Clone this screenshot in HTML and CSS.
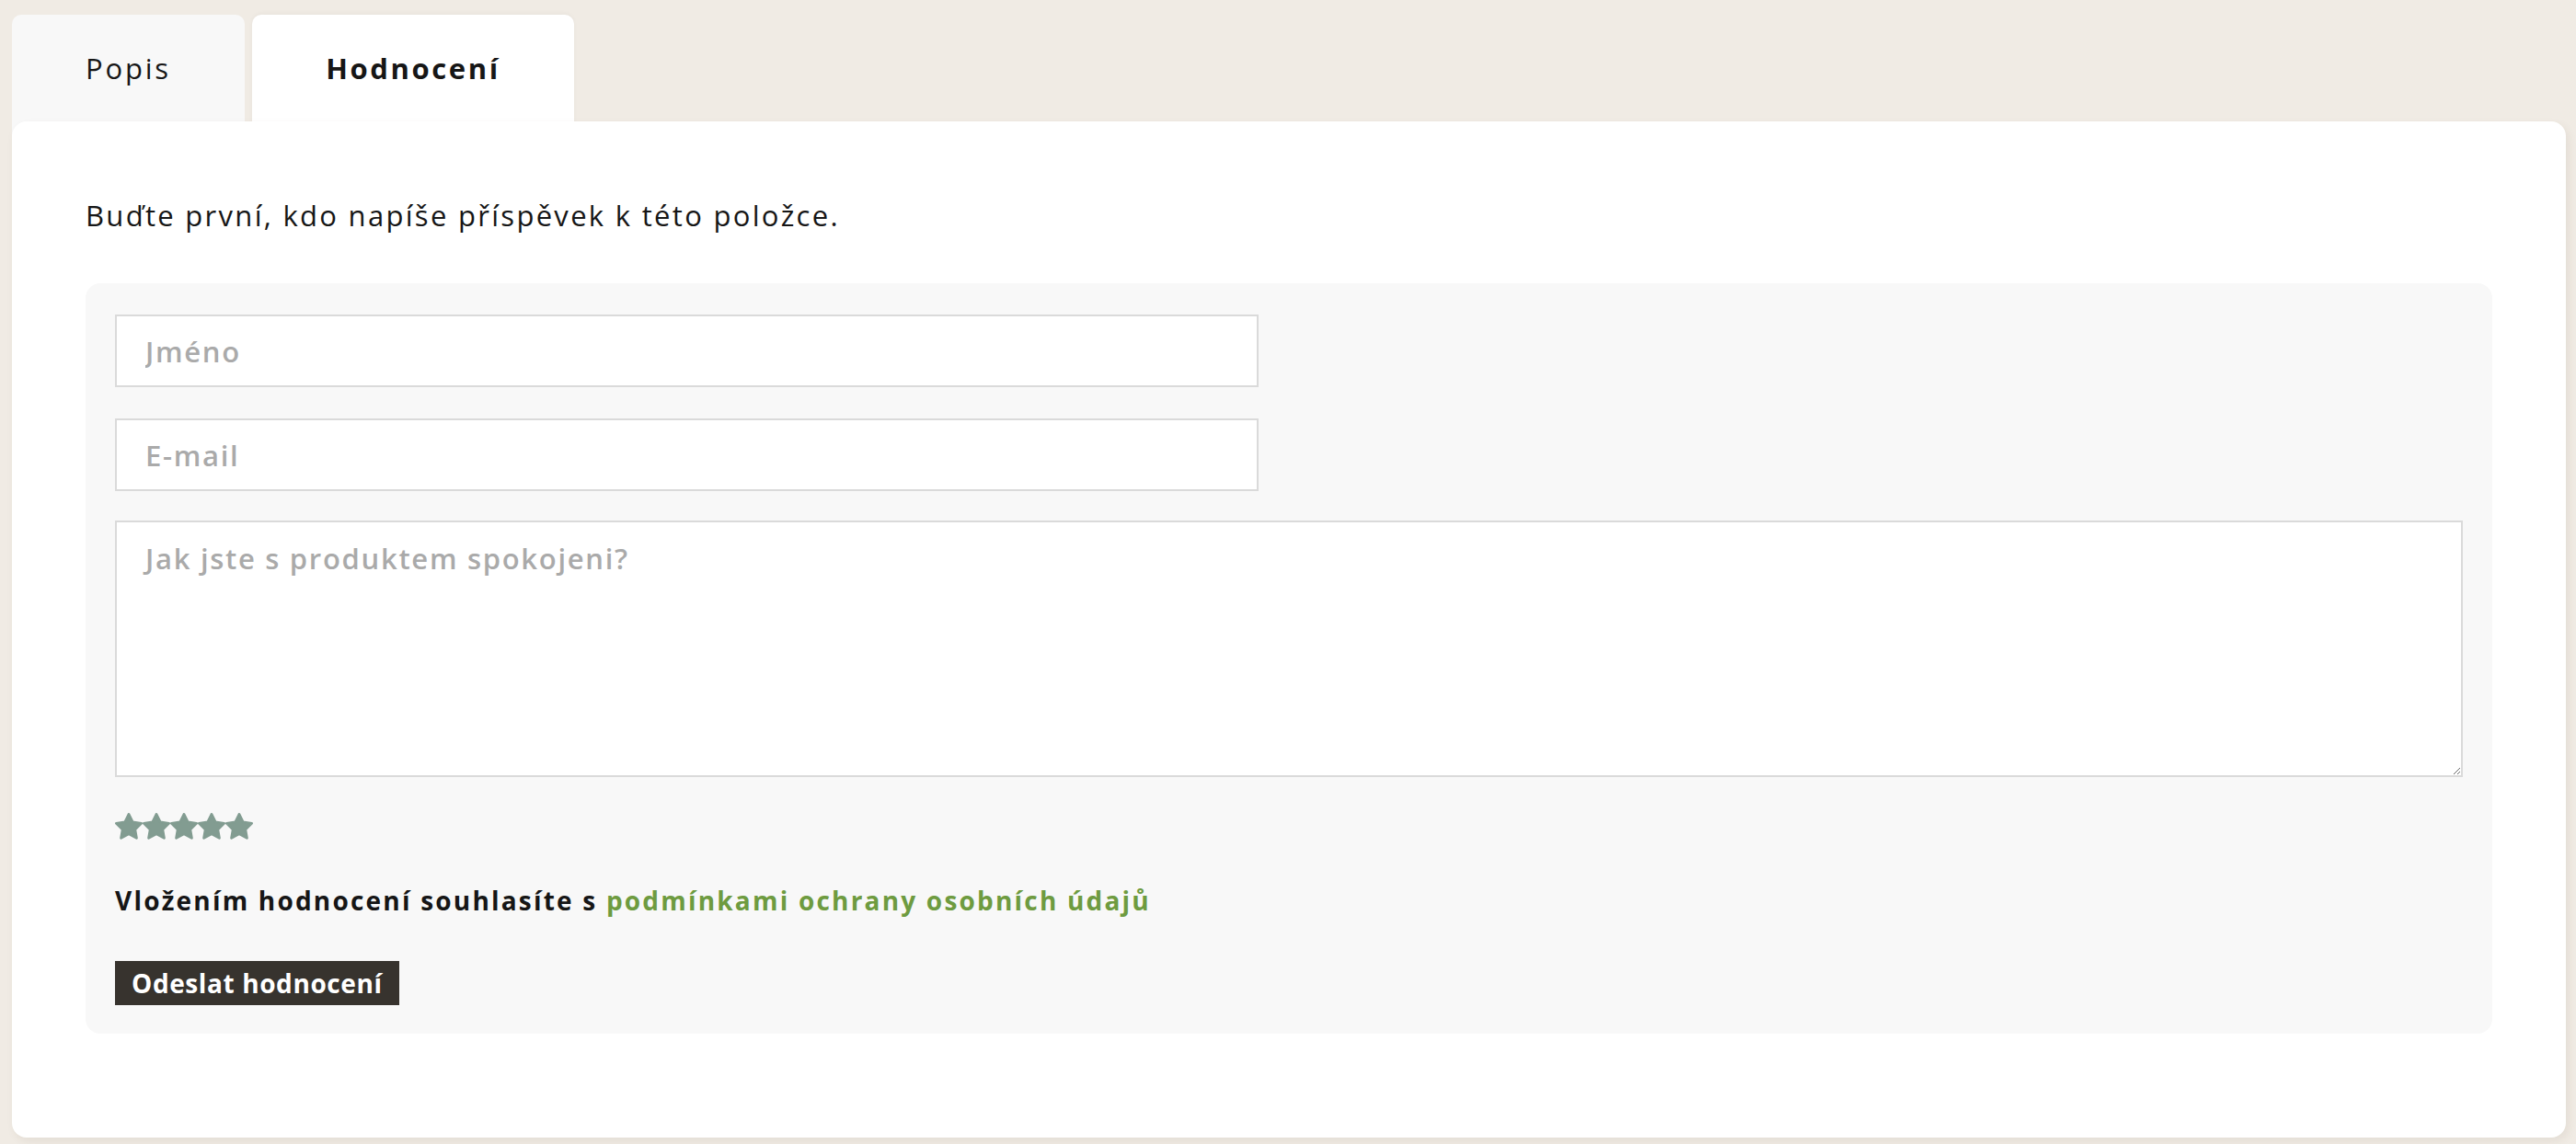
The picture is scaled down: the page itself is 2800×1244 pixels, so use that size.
FILE: index.html
```html
<!DOCTYPE html>
<html lang="cs">
<head>
    <meta charset="UTF-8">
    <meta name="viewport" content="width=device-width, initial-scale=1.0">
    <title>Hodnocení produktu</title>
    <link rel="stylesheet" href="styles.css">
</head>
<body>
    <div class="product-tabs">
        <div class="tab-list">
            <button class="tab-btn">Popis</button>
            <button class="tab-btn active">Hodnocení</button>
        </div>

        <div class="tab-panel">
            <p class="first-review">Buďte první, kdo napíše příspěvek k této položce.</p>

            <form class="review-form">
                <input type="text" class="field field-short" placeholder="Jméno">
                <input type="email" class="field field-short" placeholder="E-mail">
                <textarea class="field field-text" placeholder="Jak jste s produktem spokojeni?"></textarea>

                <div class="stars">
                    <svg viewBox="1 1 22 22"><path d="M12 2l3.09 6.26L22 9.27l-5 4.87 1.18 6.88L12 17.77l-6.18 3.25L7 14.14 2 9.27l6.91-1.01L12 2z"/></svg>
                    <svg viewBox="1 1 22 22"><path d="M12 2l3.09 6.26L22 9.27l-5 4.87 1.18 6.88L12 17.77l-6.18 3.25L7 14.14 2 9.27l6.91-1.01L12 2z"/></svg>
                    <svg viewBox="1 1 22 22"><path d="M12 2l3.09 6.26L22 9.27l-5 4.87 1.18 6.88L12 17.77l-6.18 3.25L7 14.14 2 9.27l6.91-1.01L12 2z"/></svg>
                    <svg viewBox="1 1 22 22"><path d="M12 2l3.09 6.26L22 9.27l-5 4.87 1.18 6.88L12 17.77l-6.18 3.25L7 14.14 2 9.27l6.91-1.01L12 2z"/></svg>
                    <svg viewBox="1 1 22 22"><path d="M12 2l3.09 6.26L22 9.27l-5 4.87 1.18 6.88L12 17.77l-6.18 3.25L7 14.14 2 9.27l6.91-1.01L12 2z"/></svg>
                </div>

                <p class="consent">Vložením hodnocení souhlasíte s <a href="#" class="consent-link">podmínkami ochrany osobních údajů</a></p>

                <button type="submit" class="submit-btn">Odeslat hodnocení</button>
            </form>
        </div>
    </div>
</body>
</html>
```

FILE: styles.css
```css
* {
    margin: 0;
    padding: 0;
    box-sizing: border-box;
    font-family: "Open Sans", Arial, sans-serif;
}

:root {
    --page-bg: #f0ebe4;
    --soft-grey: #f8f8f8;
    --white: #ffffff;
    --text: #161616;
    --border: #dadada;
    --placeholder: #aaaaaa;
    --star: #829c91;
    --green: #6e9b40;
    --dark: #37332e;
}

body {
    background-color: var(--page-bg);
    color: var(--text);
}

.product-tabs {
    margin: 16px 11px 8px 13px;
}

/* Tabs */
.tab-list {
    display: flex;
    gap: 8px;
    margin-bottom: -16px;
}

.tab-btn {
    height: 132px;
    padding-bottom: 16px;
    border: none;
    border-radius: 10px 10px 0 0;
    background-color: var(--soft-grey);
    color: var(--text);
    font-size: 31px;
    letter-spacing: 2.8px;
    cursor: pointer;
}

.tab-btn:first-child {
    width: 253px;
}

.tab-btn.active {
    width: 350px;
    background-color: var(--white);
    font-weight: 700;
    letter-spacing: 2.6px;
    box-shadow: 0 -2px 4px rgba(0,0,0,0.03);
}

.tab-panel {
    position: relative;
    background-color: var(--white);
    border-radius: 16px;
    padding: 80px 80px 113px 80px;
    box-shadow: 3px 4px 10px rgba(90,70,40,0.08);
}

.first-review {
    font-size: 31px;
    line-height: 44px;
    letter-spacing: 2.3px;
    margin-bottom: 52px;
}

/* Form */
.review-form {
    background-color: var(--soft-grey);
    border-radius: 16px;
    padding: 34px 32px 31px 32px;
}

.field {
    display: block;
    width: 100%;
    border: 2px solid var(--border);
    background-color: var(--white);
    color: var(--text);
    font-size: 31px;
    font-weight: 600;
    letter-spacing: 1.7px;
    padding: 0 31px;
    outline: none;
}

.field::placeholder {
    color: var(--placeholder);
}

.field-short {
    width: 1243px;
    height: 79px;
    margin-bottom: 34px;
}

.field-short + .field-text {
    margin-top: -2px;
}

.field-text {
    height: 279px;
    padding-top: 17px;
    line-height: 44px;
}

.stars {
    display: flex;
    margin-top: 39px;
}

.stars svg {
    width: 30px;
    height: 30px;
    fill: var(--star);
    stroke: var(--star);
    stroke-width: 2;
    stroke-linejoin: round;
}

.consent {
    font-size: 28px;
    font-weight: 700;
    letter-spacing: 2.2px;
    line-height: 40px;
    margin-top: 45px;
}

.consent-link {
    color: var(--green);
    text-decoration: none;
}

.consent-link:hover {
    text-decoration: underline;
}

.submit-btn {
    display: block;
    height: 48px;
    margin-top: 46px;
    padding: 0 18px;
    border: none;
    background-color: var(--dark);
    color: var(--white);
    font-size: 28px;
    font-weight: 700;
    letter-spacing: 0.6px;
    cursor: pointer;
}
```
